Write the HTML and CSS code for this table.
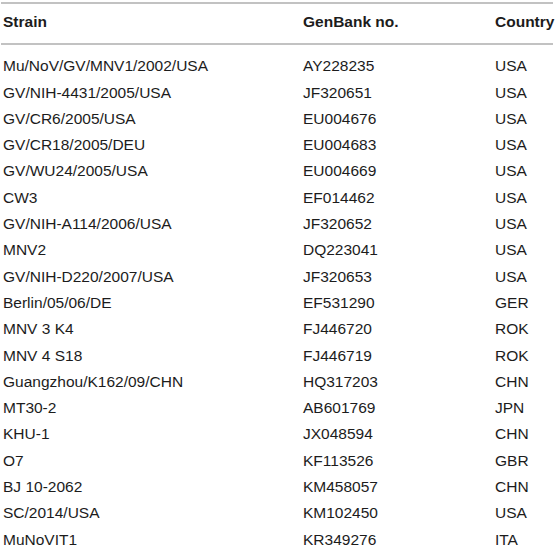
FILE: index.html
```html
<!DOCTYPE html>
<html>
<head>
<meta charset="utf-8">
<link rel="stylesheet" href="styles.css">
</head>
<body>
<table class="strains">
  <colgroup>
    <col class="c-strain">
    <col class="c-genbank">
    <col class="c-country">
  </colgroup>
  <thead>
    <tr><th>Strain</th><th>GenBank no.</th><th>Country</th></tr>
  </thead>
  <tbody>
    <tr class="first"><td>Mu/NoV/GV/MNV1/2002/USA</td><td>AY228235</td><td>USA</td></tr>
    <tr><td>GV/NIH-4431/2005/USA</td><td>JF320651</td><td>USA</td></tr>
    <tr><td>GV/CR6/2005/USA</td><td>EU004676</td><td>USA</td></tr>
    <tr><td>GV/CR18/2005/DEU</td><td>EU004683</td><td>USA</td></tr>
    <tr><td>GV/WU24/2005/USA</td><td>EU004669</td><td>USA</td></tr>
    <tr><td>CW3</td><td>EF014462</td><td>USA</td></tr>
    <tr><td>GV/NIH-A114/2006/USA</td><td>JF320652</td><td>USA</td></tr>
    <tr><td>MNV2</td><td>DQ223041</td><td>USA</td></tr>
    <tr><td>GV/NIH-D220/2007/USA</td><td>JF320653</td><td>USA</td></tr>
    <tr><td>Berlin/05/06/DE</td><td>EF531290</td><td>GER</td></tr>
    <tr><td>MNV 3 K4</td><td>FJ446720</td><td>ROK</td></tr>
    <tr><td>MNV 4 S18</td><td>FJ446719</td><td>ROK</td></tr>
    <tr><td>Guangzhou/K162/09/CHN</td><td>HQ317203</td><td>CHN</td></tr>
    <tr><td>MT30-2</td><td>AB601769</td><td>JPN</td></tr>
    <tr><td>KHU-1</td><td>JX048594</td><td>CHN</td></tr>
    <tr><td>O7</td><td>KF113526</td><td>GBR</td></tr>
    <tr><td>BJ 10-2062</td><td>KM458057</td><td>CHN</td></tr>
    <tr><td>SC/2014/USA</td><td>KM102450</td><td>USA</td></tr>
    <tr><td>MuNoVIT1</td><td>KR349276</td><td>ITA</td></tr>
  </tbody>
</table>
</body>
</html>
```
FILE: styles.css
```css
html, body {
  margin: 0;
  padding: 0;
  background: #ffffff;
}
body {
  font-family: "Liberation Sans", Arial, Helvetica, sans-serif;
  font-size: 15.5px;
  color: #1c1c1c;
}
.strains {
  margin: 2px 0 0 1px;
  width: 552px;
  border-collapse: collapse;
  table-layout: fixed;
  border-top: 2px solid #c2c2c2;
}
.c-strain { width: 302px; }
.c-genbank { width: 192px; }
.c-country { width: 58px; }
.strains th,
.strains td {
  padding: 0;
  text-align: left;
  white-space: nowrap;
  line-height: 26.3px;
}
.strains th:first-child,
.strains td:first-child {
  padding-left: 2px;
}
.strains thead th {
  font-weight: bold;
  padding-top: 5px;
  padding-bottom: 8px;
  border-bottom: 2px solid #c2c2c2;
}
.strains tr.first td {
  padding-top: 8px;
}
```
